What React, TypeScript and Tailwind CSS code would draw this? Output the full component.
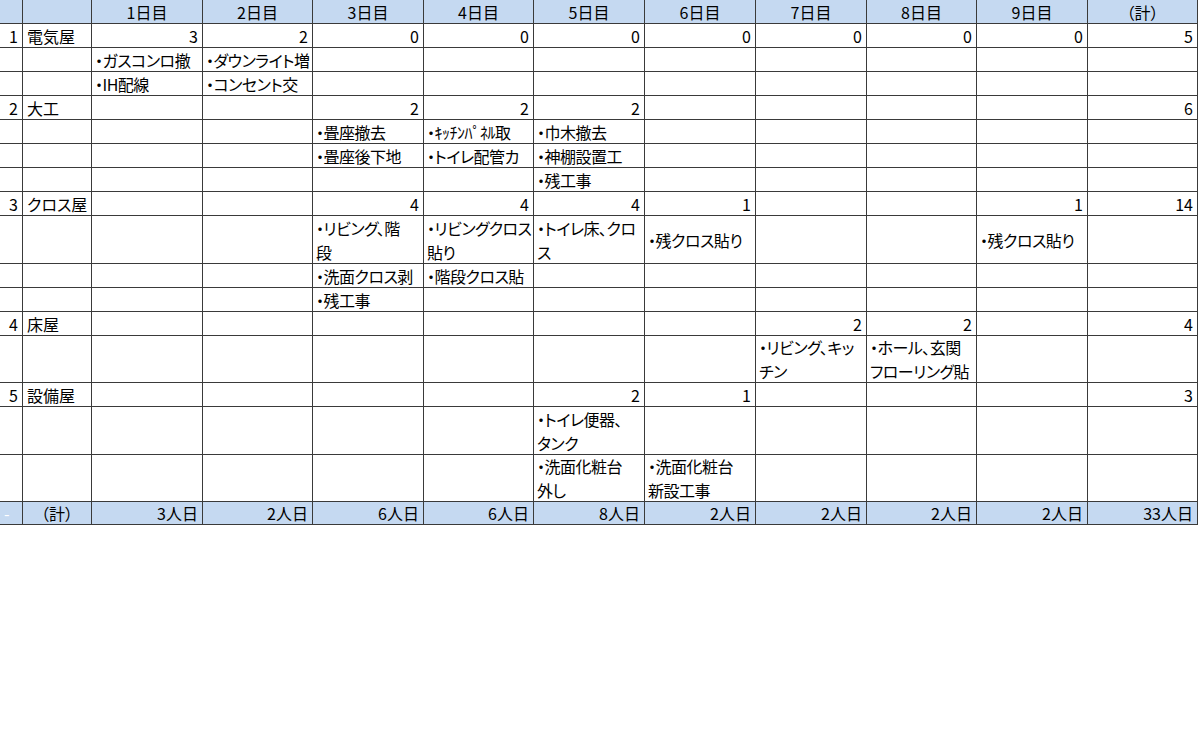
import React from 'react'

type Cell = { t?: string; a?: 'l' | 'r' | 'c'; w?: boolean; note?: boolean }
type Row = { h: string; bg?: boolean; cells: Cell[] }

const days = ['1日目', '2日目', '3日目', '4日目', '5日目', '6日目', '7日目', '8日目', '9日目']

// helper: build a sub row with notes at given day index (0-based)
function notes(h: string, items: Record<number, string>): Row {
  const cells: Cell[] = [{}, {}]
  for (let i = 0; i < 10; i++) cells.push(items[i] ? { t: items[i], a: 'l', note: true } : {})
  return { h, cells }
}

function head(no: string, name: string, counts: (number | null)[]): Row {
  const cells: Cell[] = [
    { t: no, a: 'r' },
    { t: name, a: 'l' },
  ]
  counts.forEach((c) => cells.push(c === null ? {} : { t: String(c), a: 'r' }))
  return { h: 'h-[24px]', cells }
}

const n = null

const rows: Row[] = [
  {
    h: 'h-[24px]',
    bg: true,
    cells: [{}, {}, ...days.map((d) => ({ t: d, a: 'c' as const })), { t: '（計）', a: 'c' }],
  },
  head('1', '電気屋', [3, 2, 0, 0, 0, 0, 0, 0, 0, 5]),
  notes('h-[24px]', { 0: '・ガスコンロ撤', 1: '・ダウンライト増' }),
  notes('h-[24px]', { 0: '・IH配線', 1: '・コンセント交' }),
  head('2', '大工', [n, n, 2, 2, 2, n, n, n, n, 6]),
  notes('h-[24px]', { 2: '・畳座撤去', 3: '・ｷｯﾁﾝﾊﾟﾈﾙ取', 4: '・巾木撤去' }),
  notes('h-[24px]', { 2: '・畳座後下地', 3: '・トイレ配管カ', 4: '・神棚設置工' }),
  notes('h-[24px]', { 4: '・残工事' }),
  head('3', 'クロス屋', [n, n, 4, 4, 4, 1, n, n, 1, 14]),
  notes('h-[48px]', {
    2: '・リビング、階\n段',
    3: '・リビングクロス\n貼り',
    4: '・トイレ床、クロ\nス',
    5: '・残クロス貼り',
    8: '・残クロス貼り',
  }),
  notes('h-[24px]', { 2: '・洗面クロス剥', 3: '・階段クロス貼' }),
  notes('h-[24px]', { 2: '・残工事' }),
  head('4', '床屋', [n, n, n, n, n, n, 2, 2, n, 4]),
  notes('h-[47px]', { 6: '・リビング、キッ\nチン', 7: '・ホール、玄関\nフローリング貼' }),
  head('5', '設備屋', [n, n, n, n, 2, 1, n, n, n, 3]),
  notes('h-[48px]', { 4: '・トイレ便器、\nタンク' }),
  notes('h-[47px]', { 4: '・洗面化粧台\n外し', 5: '・洗面化粧台\n新設工事' }),
  {
    h: 'h-[23px]',
    bg: true,
    cells: [
      { t: '-', a: 'l', w: true },
      { t: '（計）', a: 'c' },
      ...['3人日', '2人日', '6人日', '6人日', '8人日', '2人日', '2人日', '2人日', '2人日', '33人日'].map((t) => ({
        t,
        a: 'r' as const,
      })),
    ],
  },
]

export default function App() {
  return (
    <div className="w-[1200px] h-[738px] bg-white text-black font-['Noto_Sans_CJK_JP',sans-serif] text-[16px] leading-[24px] [font-feature-settings:'palt']">
      <div className="grid w-[1198px] grid-cols-[23px_69px_111px_110px_111px_110px_111px_111px_111px_110px_111px_110px]">
        {rows.map((row, ri) =>
          row.cells.map((c, ci) => (
            <div
              key={ri + '-' + ci}
              className={[
                row.h,
                'flex items-center overflow-hidden whitespace-pre border-b border-r border-[#3a3a3a]',
                c.note ? 'pl-[3px] pr-0 tracking-[-0.5px]' : 'px-[4px]',
                row.bg ? 'bg-[#c5d9f1]' : 'bg-white',
                c.a === 'r' ? 'justify-end text-right' : c.a === 'c' ? 'justify-center text-center' : 'justify-start text-left',
                c.w ? 'text-white' : '',
              ].join(' ')}
            >
              {c.t}
            </div>
          ))
        )}
      </div>
    </div>
  )
}
